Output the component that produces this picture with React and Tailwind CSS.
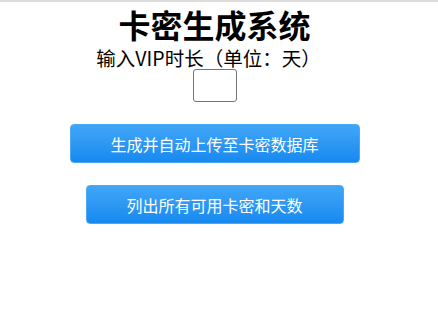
export default function App() {
    return (
        <div className="min-h-[332px] bg-white border-t-2 border-[#dcdcdc] flex flex-col items-center pr-[9px] font-['Noto_Sans_CJK_SC',sans-serif] text-black">
            <h1 className="text-[32px] font-bold leading-[36px] mt-[4px]">卡密生成系统</h1>
            <label className="text-[19.5px] leading-[24px] mt-[4px] -ml-[12px]">输入VIP时长（单位：天）</label>
            <input
                type="text"
                className="w-[44px] h-[33px] border border-[#767676] rounded-[3px] outline-none mt-[-1px]"
            />
            <button className="mt-[22px] w-[290px] h-[39px] text-[16px] text-white rounded-[4px] border border-[#4aa8f5] bg-gradient-to-b from-[#40a6f7] to-[#1589f0]">
                生成并自动上传至卡密数据库
            </button>
            <button className="mt-[22px] w-[258px] h-[39px] text-[16px] text-white rounded-[4px] border border-[#4aa8f5] bg-gradient-to-b from-[#40a6f7] to-[#1589f0]">
                列出所有可用卡密和天数
            </button>
        </div>
    );
}
